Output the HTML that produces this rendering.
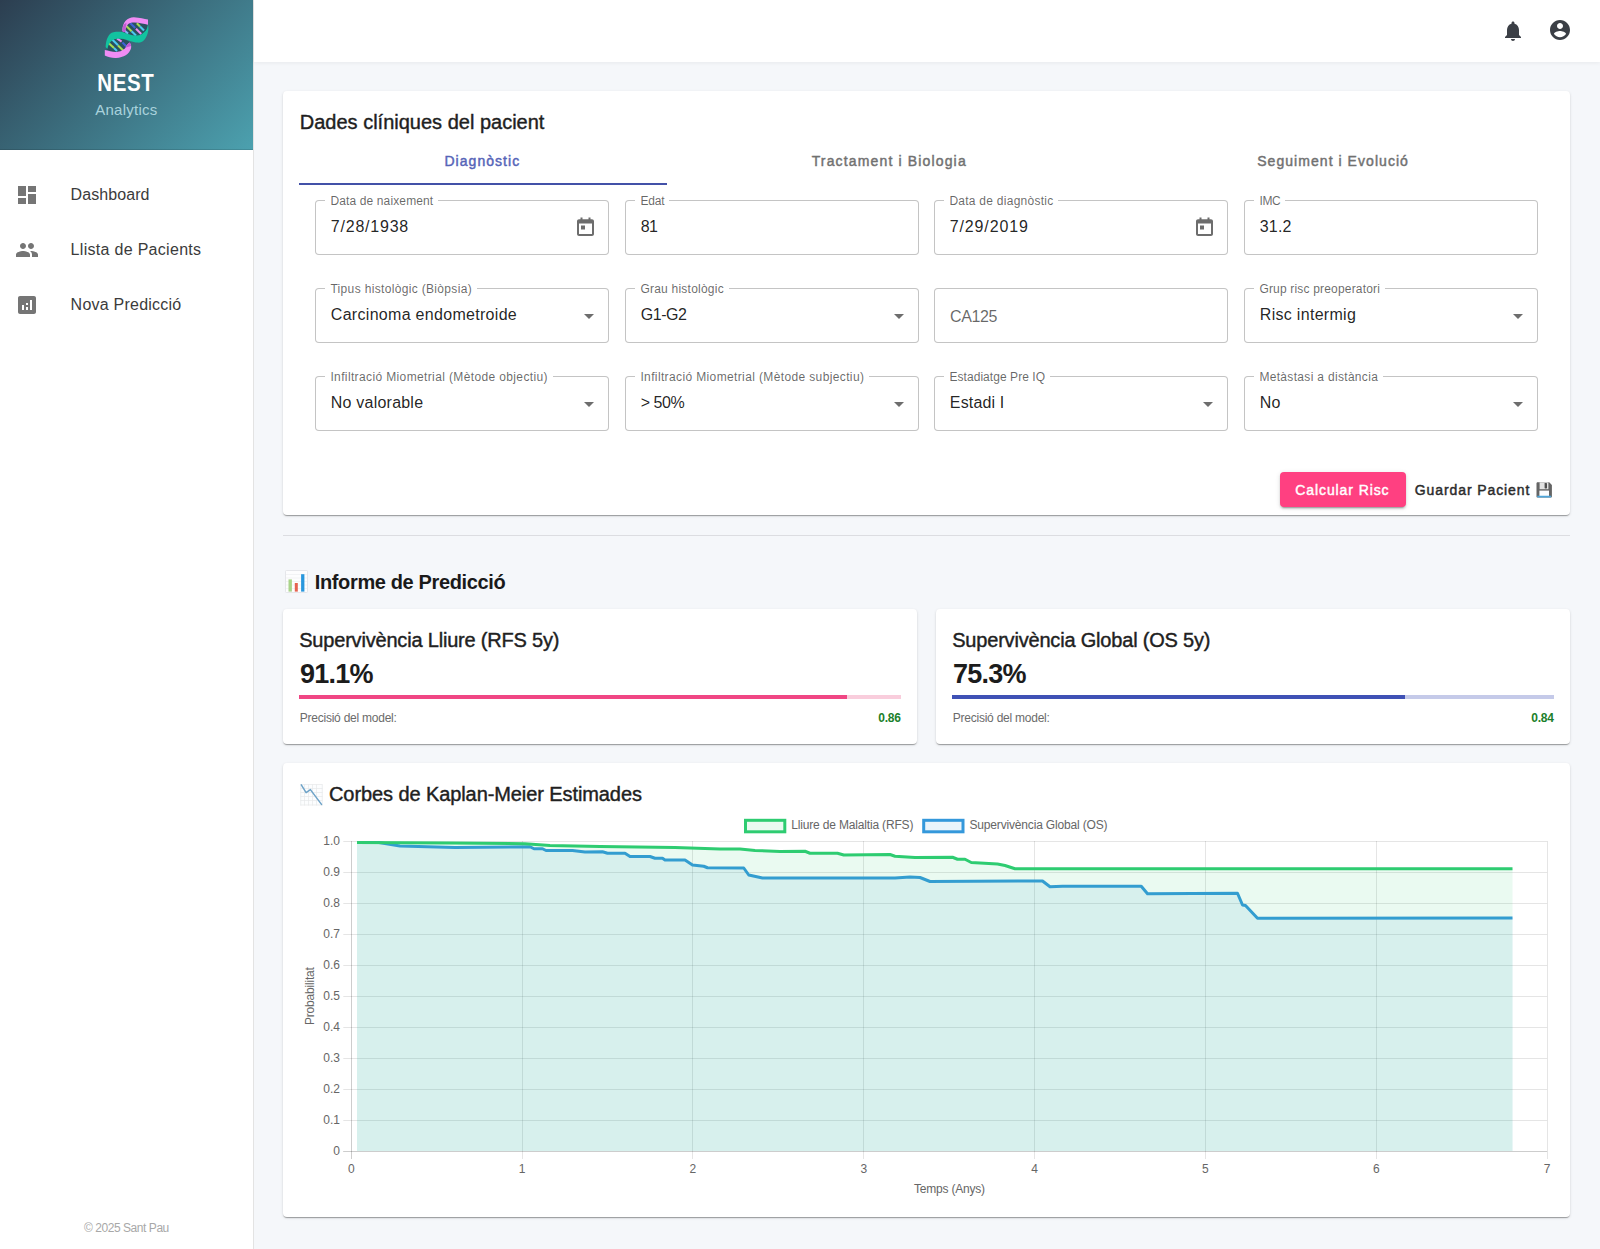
<!DOCTYPE html>
<html><head><meta charset="utf-8"><title>NEST Analytics</title><style>
*{margin:0;padding:0;box-sizing:border-box}
html,body{width:1600px;height:1249px;overflow:hidden;background:#f5f7fa;font-family:"Liberation Sans",sans-serif}
.t{position:absolute;line-height:1;white-space:nowrap}
.abs{position:absolute}
#side{position:absolute;left:0;top:0;width:254px;height:1249px;background:#fff;border-right:1px solid #e3e3e3}
#sidehead{position:absolute;left:0;top:0;width:253px;height:150px;background:linear-gradient(135deg,#2c3e50 0%,#4ca1af 100%);box-shadow:inset 0 -1px 0 rgba(0,0,0,.12)}
#topbar{position:absolute;left:254px;top:0;width:1346px;height:62px;background:#fff;box-shadow:0 1px 4px rgba(0,0,0,.06)}
.card{position:absolute;background:#fff;border-radius:4px;box-shadow:0px 2px 1px -1px rgba(0,0,0,0.2),0px 1px 1px 0px rgba(0,0,0,0.14),0px 1px 3px 0px rgba(0,0,0,0.12)}
.fld{position:absolute;border:1px solid rgba(0,0,0,0.23);border-radius:4px;background:#fff}
.gap{position:absolute;height:3px;background:#fff}
svg{position:absolute;overflow:visible}
</style></head><body>
<div id="side"></div><div id="sidehead"></div>
<svg style="left:100px;top:12px" width="52" height="50" viewBox="0 0 52 50">
<path d="M24 13 C28 9.5 40 9.5 47 12.5 L47.5 18 C44 23 38 25 30 22.5 C27 21.5 25 21 24.2 20 Z" fill="#1e3f4c" opacity="0.55"/>
<path d="M7.5 31 C9 26 13 24.5 18 25.5 C24 27 29 28.5 30.5 31.5 C31 36 28 40 22 40.5 C15 40.5 9 39 6.5 37.5 Z" fill="#1e3f4c" opacity="0.55"/>
<g stroke-width="2.1" stroke-linecap="butt" fill="none">
<path d="M25.6 13.2 L31.6 19.2" stroke="#a6dc52"/><path d="M31.6 19.2 L36 23.6" stroke="#4cc8f0"/>
<path d="M24.8 18.8 L28 21.6" stroke="#7ab8f5"/>
<path d="M30.4 11.2 L35.2 16" stroke="#3f63d6"/><path d="M36 16.8 L41.2 22" stroke="#ee8cf2"/>
<path d="M36.8 11.2 L40 14.4" stroke="#a6dc52"/><path d="M40 14.4 L44 18.4" stroke="#4cc8f0"/>
<path d="M8 30.4 L14 36" stroke="#a6dc52"/><path d="M14 36 L17 39" stroke="#4cc8f0"/>
<path d="M12 27.2 L18 33.2" stroke="#4cc8f0"/><path d="M18 33.6 L24 39.2" stroke="#a6dc52"/>
<path d="M17 26.4 L21.6 29.6" stroke="#ee8cf2"/><path d="M22.4 30.4 L28 36" stroke="#3f63d6"/>
</g>
<path d="M22.4 19 C22 10 28 5 34 5.2 C40 5.5 44 7 48 7.6 L48 12.8 C44 12 40 10.6 34 10.5 C29 10.4 25.8 12.5 25.2 20 Z" fill="#f08cf5"/>
<path d="M22.6 16 C23 13 24.5 11.5 26.5 10.8 L25.2 20 L22.6 20 Z" fill="#c05ad0"/>
<path d="M4.8 38 C8 38.5 12 40 16 40 C20 40 24.5 38 26 34.8 C27 33 27.5 31.5 29.6 30.4 C31.5 32 31.5 35 30.8 37 C29 42 24 45.5 16 46 C12 46.2 8 45 4.8 43.6 Z" fill="#f08cf5"/>
<path d="M26 34.8 C27 33 27.5 31.5 29.6 30.4 C30.6 31.4 31 32.6 31 34 C29.5 34.5 28 35 26 35.5 Z" fill="#c05ad0"/>
<path d="M5.6 35 C5.8 30.5 6.6 27.5 7.8 25.2 C9.3 22.2 11 20.6 13.4 20.2 C15.6 19.7 17.6 19.6 20 19.7 C23 20 25.5 21.2 28 22 C31 23 33.5 23.6 36 23.6 C38.5 23.5 40.5 23 42 22 C44.3 20.5 45.8 18.6 46.6 17.2 C47.4 15.6 47.8 14.2 48.2 12.6 L48.4 17 C48.3 18.8 48 20.3 47.6 21.4 C46.7 24.2 45.5 26.6 44.2 28 C42.2 30.2 40 30.8 37.8 30.6 C34.8 30.5 32.3 29.8 29.8 29 C26.8 28 24.4 27 21.9 26.8 C19 26.6 16.3 26.7 14.4 27.2 C12.3 28 10.8 29.2 9.8 30.8 C8.6 32.8 7.8 34.8 7.3 37 Z" fill="#12c3a0"/>
</svg>
<div class="t " style="left:97.30px;top:74.25px;font-size:20.5px;color:#ffffff;font-weight:700;letter-spacing:0.600px;transform:scaleY(1.13);transform-origin:0 17.35px;">NEST</div>
<div class="t " style="left:95.20px;top:101.80px;font-size:15px;color:#a9d2dc;font-weight:400;letter-spacing:0.250px;">Analytics</div>
<svg style="left:15px;top:183px" width="24" height="24" viewBox="0 0 24 24"><path fill="#757575" d="M3 13h8V3H3v10zm0 8h8v-6H3v6zm10 0h8V11h-8v10zm0-18v6h8V3h-8z"/></svg>
<svg style="left:15px;top:238px" width="24" height="24" viewBox="0 0 24 24"><path fill="#757575" d="M16 11c1.66 0 2.99-1.34 2.99-3S17.66 5 16 5c-1.66 0-3 1.34-3 3s1.34 3 3 3zm-8 0c1.66 0 2.99-1.34 2.99-3S9.66 5 8 5C6.34 5 5 6.34 5 8s1.34 3 3 3zm0 2c-2.33 0-7 1.17-7 3.5V19h14v-2.5c0-2.33-4.67-3.5-7-3.5zm8 0c-.29 0-.62.02-.97.05 1.16.84 1.97 1.97 1.97 3.45V19h6v-2.5c0-2.33-4.67-3.5-7-3.5z"/></svg>
<svg style="left:15px;top:293px" width="24" height="24" viewBox="0 0 24 24"><path fill="#757575" d="M19 3H5c-1.1 0-2 .9-2 2v14c0 1.1.9 2 2 2h14c1.1 0 2-.9 2-2V5c0-1.1-.9-2-2-2zM9 17H7v-5h2v5zm4 0h-2v-3h2v3zm0-5h-2v-2h2v2zm4 5h-2V7h2v10z"/></svg>
<div class="t " style="left:70.60px;top:187.46px;font-size:16px;color:#3b3b3b;font-weight:400;letter-spacing:0.070px;">Dashboard</div>
<div class="t " style="left:70.60px;top:242.06px;font-size:16px;color:#3b3b3b;font-weight:400;letter-spacing:0.300px;">Llista de Pacients</div>
<div class="t " style="left:70.60px;top:297.26px;font-size:16px;color:#3b3b3b;font-weight:400;letter-spacing:0.230px;">Nova Predicció</div>
<div class="t " style="left:84.00px;top:1222.24px;font-size:12px;color:#a8a8a8;font-weight:400;letter-spacing:-0.450px;">© 2025 Sant Pau</div>
<div id="topbar"></div>
<svg style="left:1501px;top:18.5px" width="24" height="24" viewBox="0 0 24 24"><path fill="#3b3f46" d="M12 22c1.1 0 2-.9 2-2h-4c0 1.1.89 2 2 2zm6-6v-5c0-3.07-1.64-5.64-4.5-6.32V4c0-.83-.67-1.5-1.5-1.5s-1.5.67-1.5 1.5v.68C7.63 5.36 6 7.92 6 11v5l-2 2v1h16v-1l-2-2z"/></svg>
<svg style="left:1548px;top:18px" width="24" height="24" viewBox="0 0 24 24"><path fill="#3b3f46" d="M12 2C6.48 2 2 6.48 2 12s4.48 10 10 10 10-4.48 10-10S17.52 2 12 2zm0 3c1.66 0 3 1.34 3 3s-1.34 3-3 3-3-1.34-3-3 1.34-3 3-3zm0 14.2c-2.5 0-4.71-1.28-6-3.22.03-1.99 4-3.08 6-3.08 1.99 0 5.97 1.09 6 3.08-1.29 1.94-3.5 3.22-6 3.22z"/></svg>
<div class="card" style="left:283px;top:91px;width:1287px;height:424px"></div>
<div class="t " style="left:299.80px;top:111.67px;font-size:20px;color:#1f1f1f;font-weight:400;-webkit-text-stroke:0.4px #1f1f1f;">Dades clíniques del pacient</div>
<div class="t " style="left:444.40px;top:153.95px;font-size:14px;color:#5664b8;font-weight:400;letter-spacing:1.050px;-webkit-text-stroke:0.45px #5664b8;">Diagnòstic</div>
<div class="t " style="left:811.70px;top:154.15px;font-size:14px;color:#6f6f6f;font-weight:400;letter-spacing:1.150px;-webkit-text-stroke:0.45px #737373;">Tractament i Biologia</div>
<div class="t " style="left:1257.20px;top:154.15px;font-size:14px;color:#6f6f6f;font-weight:400;letter-spacing:1.050px;-webkit-text-stroke:0.45px #737373;">Seguiment i Evolució</div>
<div class="abs" style="left:299px;top:183px;width:368px;height:2px;background:#4351a8"></div>
<div class="fld" style="left:315px;top:200px;width:294px;height:55px"></div>
<div class="gap" style="left:325px;top:199px;width:112.9px"></div>
<div class="t " style="left:330.40px;top:194.64px;font-size:12px;color:rgba(0,0,0,0.6);font-weight:400;letter-spacing:0.130px;">Data de naixement</div>
<div class="t " style="left:330.80px;top:219.46px;font-size:16px;color:rgba(0,0,0,0.87);font-weight:400;letter-spacing:0.780px;">7/28/1938</div>
<svg style="left:577px;top:217px" width="17" height="19" viewBox="0 0 17 19"><path fill="#6d6d6d" d="M3.5 0.5h2v1.8h6V0.5h2v1.8H15c1.1 0 2 .9 2 2V17c0 1.1-.9 2-2 2H2c-1.1 0-2-.9-2-2V4.3c0-1.1.9-2 2-2h1.5zM2 6.5V17h13V6.5zM4 8.5h4v4H4z"/></svg>
<div class="fld" style="left:625px;top:200px;width:294px;height:55px"></div>
<div class="gap" style="left:635px;top:199px;width:34.0px"></div>
<div class="t " style="left:640.40px;top:194.64px;font-size:12px;color:rgba(0,0,0,0.6);font-weight:400;letter-spacing:-0.160px;">Edat</div>
<div class="t " style="left:640.80px;top:219.46px;font-size:16px;color:rgba(0,0,0,0.87);font-weight:400;letter-spacing:-0.600px;">81</div>
<div class="fld" style="left:934px;top:200px;width:294px;height:55px"></div>
<div class="gap" style="left:944px;top:199px;width:114.1px"></div>
<div class="t " style="left:949.40px;top:194.64px;font-size:12px;color:rgba(0,0,0,0.6);font-weight:400;letter-spacing:0.260px;">Data de diagnòstic</div>
<div class="t " style="left:949.80px;top:219.46px;font-size:16px;color:rgba(0,0,0,0.87);font-weight:400;letter-spacing:0.850px;">7/29/2019</div>
<svg style="left:1196px;top:217px" width="17" height="19" viewBox="0 0 17 19"><path fill="#6d6d6d" d="M3.5 0.5h2v1.8h6V0.5h2v1.8H15c1.1 0 2 .9 2 2V17c0 1.1-.9 2-2 2H2c-1.1 0-2-.9-2-2V4.3c0-1.1.9-2 2-2h1.5zM2 6.5V17h13V6.5zM4 8.5h4v4H4z"/></svg>
<div class="fld" style="left:1244px;top:200px;width:294px;height:55px"></div>
<div class="gap" style="left:1254px;top:199px;width:31.1px"></div>
<div class="t " style="left:1259.40px;top:194.64px;font-size:12px;color:rgba(0,0,0,0.6);font-weight:400;letter-spacing:-0.300px;">IMC</div>
<div class="t " style="left:1259.80px;top:219.46px;font-size:16px;color:rgba(0,0,0,0.87);font-weight:400;letter-spacing:0.160px;">31.2</div>
<div class="fld" style="left:315px;top:288px;width:294px;height:55px"></div>
<div class="gap" style="left:325px;top:287px;width:151.7px"></div>
<div class="t " style="left:330.40px;top:282.64px;font-size:12px;color:rgba(0,0,0,0.6);font-weight:400;letter-spacing:0.335px;">Tipus histològic (Biòpsia)</div>
<div class="t " style="left:330.80px;top:307.46px;font-size:16px;color:rgba(0,0,0,0.87);font-weight:400;letter-spacing:0.300px;">Carcinoma endometroide</div>
<svg style="left:577px;top:303.5px" width="24" height="24" viewBox="0 0 24 24"><path fill="#6d6d6d" d="M7 10l5 5 5-5z"/></svg>
<div class="fld" style="left:625px;top:288px;width:294px;height:55px"></div>
<div class="gap" style="left:635px;top:287px;width:93.5px"></div>
<div class="t " style="left:640.40px;top:282.64px;font-size:12px;color:rgba(0,0,0,0.6);font-weight:400;letter-spacing:0.230px;">Grau histològic</div>
<div class="t " style="left:640.80px;top:307.46px;font-size:16px;color:rgba(0,0,0,0.87);font-weight:400;letter-spacing:-0.500px;">G1-G2</div>
<svg style="left:887px;top:303.5px" width="24" height="24" viewBox="0 0 24 24"><path fill="#6d6d6d" d="M7 10l5 5 5-5z"/></svg>
<div class="fld" style="left:934px;top:288px;width:294px;height:55px"></div>
<div class="t " style="left:950.00px;top:308.96px;font-size:16px;color:rgba(0,0,0,0.6);font-weight:400;letter-spacing:-0.360px;">CA125</div>
<div class="fld" style="left:1244px;top:288px;width:294px;height:55px"></div>
<div class="gap" style="left:1254px;top:287px;width:130.7px"></div>
<div class="t " style="left:1259.40px;top:282.64px;font-size:12px;color:rgba(0,0,0,0.6);font-weight:400;letter-spacing:0.180px;">Grup risc preoperatori</div>
<div class="t " style="left:1259.80px;top:307.46px;font-size:16px;color:rgba(0,0,0,0.87);font-weight:400;letter-spacing:0.300px;">Risc intermig</div>
<svg style="left:1506px;top:303.5px" width="24" height="24" viewBox="0 0 24 24"><path fill="#6d6d6d" d="M7 10l5 5 5-5z"/></svg>
<div class="fld" style="left:315px;top:376px;width:294px;height:55px"></div>
<div class="gap" style="left:325px;top:375px;width:227.5px"></div>
<div class="t " style="left:330.40px;top:370.64px;font-size:12px;color:rgba(0,0,0,0.6);font-weight:400;letter-spacing:0.370px;">Infiltració Miometrial (Mètode objectiu)</div>
<div class="t " style="left:330.80px;top:395.46px;font-size:16px;color:rgba(0,0,0,0.87);font-weight:400;letter-spacing:0.220px;">No valorable</div>
<svg style="left:577px;top:391.5px" width="24" height="24" viewBox="0 0 24 24"><path fill="#6d6d6d" d="M7 10l5 5 5-5z"/></svg>
<div class="fld" style="left:625px;top:376px;width:294px;height:55px"></div>
<div class="gap" style="left:635px;top:375px;width:233.9px"></div>
<div class="t " style="left:640.40px;top:370.64px;font-size:12px;color:rgba(0,0,0,0.6);font-weight:400;letter-spacing:0.370px;">Infiltració Miometrial (Mètode subjectiu)</div>
<div class="t " style="left:640.80px;top:395.46px;font-size:16px;color:rgba(0,0,0,0.87);font-weight:400;letter-spacing:-0.500px;">> 50%</div>
<svg style="left:887px;top:391.5px" width="24" height="24" viewBox="0 0 24 24"><path fill="#6d6d6d" d="M7 10l5 5 5-5z"/></svg>
<div class="fld" style="left:934px;top:376px;width:294px;height:55px"></div>
<div class="gap" style="left:944px;top:375px;width:105.7px"></div>
<div class="t " style="left:949.40px;top:370.64px;font-size:12px;color:rgba(0,0,0,0.6);font-weight:400;letter-spacing:0.060px;">Estadiatge Pre IQ</div>
<div class="t " style="left:949.80px;top:395.46px;font-size:16px;color:rgba(0,0,0,0.87);font-weight:400;letter-spacing:0.160px;">Estadi I</div>
<svg style="left:1196px;top:391.5px" width="24" height="24" viewBox="0 0 24 24"><path fill="#6d6d6d" d="M7 10l5 5 5-5z"/></svg>
<div class="fld" style="left:1244px;top:376px;width:294px;height:55px"></div>
<div class="gap" style="left:1254px;top:375px;width:128.8px"></div>
<div class="t " style="left:1259.40px;top:370.64px;font-size:12px;color:rgba(0,0,0,0.6);font-weight:400;letter-spacing:0.320px;">Metàstasi a distància</div>
<div class="t " style="left:1259.80px;top:395.46px;font-size:16px;color:rgba(0,0,0,0.87);font-weight:400;letter-spacing:0.260px;">No</div>
<svg style="left:1506px;top:391.5px" width="24" height="24" viewBox="0 0 24 24"><path fill="#6d6d6d" d="M7 10l5 5 5-5z"/></svg>
<div class="abs" style="left:1280px;top:472px;width:126px;height:35px;border-radius:4px;background:#ff4081;box-shadow:0px 3px 1px -2px rgba(0,0,0,0.2),0px 2px 2px 0px rgba(0,0,0,0.14),0px 1px 5px 0px rgba(0,0,0,0.12)"></div>
<div class="t " style="left:1295.30px;top:482.85px;font-size:14px;color:#ffffff;font-weight:400;letter-spacing:0.900px;-webkit-text-stroke:0.45px #ffffff;">Calcular Risc</div>
<div class="t " style="left:1414.80px;top:482.85px;font-size:14px;color:#2b2b2b;font-weight:400;letter-spacing:0.900px;-webkit-text-stroke:0.45px #2b2b2b;">Guardar Pacient</div>
<svg style="left:1536px;top:482px" width="16" height="16" viewBox="0 0 16 16">
<path d="M0.5 1.5C0.5 0.9 0.9 0.3 1.5 0.3H13.2L15.9 3V14.5C15.9 15.1 15.4 15.5 14.9 15.5H1.5C0.9 15.5 0.5 15.1 0.5 14.5z" fill="#646464"/>
<rect x="3.6" y="0.3" width="8.8" height="6.9" fill="#e2e2e2"/><rect x="8.6" y="1" width="2.4" height="5.4" rx="0.6" fill="#505050"/>
<rect x="3.4" y="8.6" width="9.6" height="5.6" fill="#fbfdff"/><path d="M1.2 13.8H15.2V14.6C15.2 15.1 14.9 15.5 14.4 15.5H2C1.5 15.5 1.2 15.1 1.2 14.6z" fill="#4ea6db"/>
</svg>
<div class="abs" style="left:283px;top:535px;width:1287px;height:1px;background:#dcdde1"></div>
<svg style="left:285px;top:570px" width="23" height="23" viewBox="0 0 23 23">
<rect x="0.5" y="0.5" width="22" height="22" rx="1" fill="#fdfdfe" stroke="#dfe1e4" stroke-width="0.8"/>
<g stroke="#eceef0" stroke-width="0.7"><path d="M1 4.5h21M1 8h21M1 11.5h21M1 15h21M1 18.5h21"/></g>
<rect x="3.5" y="9.4" width="3.4" height="12.2" fill="#a9d48a"/>
<rect x="9.8" y="13" width="3" height="8.6" fill="#e5624f"/>
<rect x="16.1" y="4.2" width="3.3" height="17.4" fill="#2897dd"/>
</svg>
<div class="t " style="left:314.80px;top:571.87px;font-size:20px;color:#1a1a1a;font-weight:700;letter-spacing:-0.370px;">Informe de Predicció</div>
<div class="card" style="left:283px;top:609px;width:634px;height:135px"></div>
<div class="t " style="left:299.20px;top:629.97px;font-size:20px;color:#212121;font-weight:400;letter-spacing:-0.190px;-webkit-text-stroke:0.4px #212121;">Supervivència Lliure (RFS 5y)</div>
<div class="t " style="left:300.00px;top:660.94px;font-size:27px;color:#1c1c1c;font-weight:700;letter-spacing:-0.750px;">91.1%</div>
<div class="abs" style="left:299px;top:695px;width:602px;height:4px;background:#f9cddc"></div>
<div class="abs" style="left:299px;top:695px;width:548.4px;height:4px;background:#f04684"></div>
<div class="t " style="left:299.80px;top:712.44px;font-size:12px;color:#6b6b6b;font-weight:400;letter-spacing:-0.240px;">Precisió del model:</div>
<div class="t " style="left:878.30px;top:712.34px;font-size:12px;color:#1b7f2b;font-weight:700;letter-spacing:-0.220px;">0.86</div>
<div class="card" style="left:936px;top:609px;width:634px;height:135px"></div>
<div class="t " style="left:952.20px;top:629.97px;font-size:20px;color:#212121;font-weight:400;letter-spacing:-0.190px;-webkit-text-stroke:0.4px #212121;">Supervivència Global (OS 5y)</div>
<div class="t " style="left:953.00px;top:660.94px;font-size:27px;color:#1c1c1c;font-weight:700;letter-spacing:-0.750px;">75.3%</div>
<div class="abs" style="left:952px;top:695px;width:602px;height:4px;background:#c5cae9"></div>
<div class="abs" style="left:952px;top:695px;width:453.3px;height:4px;background:#3f51b5"></div>
<div class="t " style="left:952.80px;top:712.44px;font-size:12px;color:#6b6b6b;font-weight:400;letter-spacing:-0.240px;">Precisió del model:</div>
<div class="t " style="left:1531.30px;top:712.34px;font-size:12px;color:#1b7f2b;font-weight:700;letter-spacing:-0.220px;">0.84</div>
<div class="card" style="left:283px;top:763px;width:1287px;height:454px"></div>
<svg style="left:300px;top:784px" width="23" height="22" viewBox="0 0 23 22">
<rect x="0.5" y="0.3" width="22" height="21.4" fill="#fcfdfe"/>
<g stroke="#e6e8ea" stroke-width="0.7"><path d="M0.5 0.5h22M0.5 4.5h22M0.5 8.5h22M0.5 12.5h22M0.5 16.5h22M0.5 21h22M0.7 0.5v21M4.5 0.5v21M8.5 0.5v21M12.5 0.5v21M16.5 0.5v21M22.3 0.5v21"/></g>
<path d="M1.3 0.8 L6.1 8.6 L10.4 5.6 L21.5 20.4" fill="none" stroke="#6ea3c8" stroke-width="1.5" stroke-linejoin="round" stroke-linecap="round"/>
</svg>
<div class="t " style="left:329.00px;top:783.67px;font-size:20px;color:#212121;font-weight:400;letter-spacing:-0.090px;-webkit-text-stroke:0.4px #212121;">Corbes de Kaplan-Meier Estimades</div>
<svg style="left:0;top:0" width="1600" height="1249" viewBox="0 0 1600 1249">
<path d="M343.3 1151.5H1547.1 M343.3 1120.5H1547.1 M343.3 1089.5H1547.1 M343.3 1058.5H1547.1 M343.3 1027.5H1547.1 M343.3 996.5H1547.1 M343.3 965.5H1547.1 M343.3 934.5H1547.1 M343.3 903.5H1547.1 M343.3 872.5H1547.1 M343.3 841.5H1547.1 M351.5 841V1159 M522.5 841V1159 M692.5 841V1159 M863.5 841V1159 M1034.5 841V1159 M1205.5 841V1159 M1376.5 841V1159 M1547.5 841V1159" stroke="rgba(0,0,0,0.1)" stroke-width="1" fill="none"/>
<path d="M351.5 841V1159M343 1151.5H1547.1" stroke="rgba(0,0,0,0.1)" stroke-width="1" fill="none"/>
<path d="M357 842.5 L379 842.5 L400 846 L455 847.5 L530 846.75 L534 848.75 L542.5 848.75 L546 850.5 L572.5 850.5 L585 852 L602.5 851.75 L607.5 853.25 L625 853.25 L630 856.5 L650 856.5 L655 858.25 L662.5 858.25 L665 860 L685 860 L692.5 865 L703.75 866.25 L707.5 867.75 L743.75 868 L748.75 875 L762.5 878 L895 878 L910 877 L920 877.5 L930 881.5 L1027.5 881 L1042.5 881 L1050 886.75 L1062.5 886.25 L1141.25 886.25 L1147.5 893.75 L1237.5 893.25 L1242.5 905 L1245.5 905.5 L1257.5 918.25 L1512.5 918 L1512.5 1151 L357 1151 Z" fill="rgba(52,152,219,0.1)"/>
<path d="M357 842.5 L379 842.5 L400 846 L455 847.5 L530 846.75 L534 848.75 L542.5 848.75 L546 850.5 L572.5 850.5 L585 852 L602.5 851.75 L607.5 853.25 L625 853.25 L630 856.5 L650 856.5 L655 858.25 L662.5 858.25 L665 860 L685 860 L692.5 865 L703.75 866.25 L707.5 867.75 L743.75 868 L748.75 875 L762.5 878 L895 878 L910 877 L920 877.5 L930 881.5 L1027.5 881 L1042.5 881 L1050 886.75 L1062.5 886.25 L1141.25 886.25 L1147.5 893.75 L1237.5 893.25 L1242.5 905 L1245.5 905.5 L1257.5 918.25 L1512.5 918" fill="none" stroke="#3498db" stroke-width="3" stroke-linejoin="round"/>
<path d="M357 842.5 L450 843 L525 843.75 L550 845.5 L600 846.5 L675 847.5 L720 849 L740 849 L755 850.5 L780 851.5 L805 851.25 L810 853.25 L837.5 853.25 L843.75 855 L890 854.5 L895 856.25 L915 857.5 L952.5 857.25 L957.5 859.25 L965 859.25 L971.25 862.5 L997.5 864 L1005 865.5 L1015 868.75 L1512.5 868.75 L1512.5 1151 L357 1151 Z" fill="rgba(46,204,113,0.1)"/>
<path d="M357 842.5 L450 843 L525 843.75 L550 845.5 L600 846.5 L675 847.5 L720 849 L740 849 L755 850.5 L780 851.5 L805 851.25 L810 853.25 L837.5 853.25 L843.75 855 L890 854.5 L895 856.25 L915 857.5 L952.5 857.25 L957.5 859.25 L965 859.25 L971.25 862.5 L997.5 864 L1005 865.5 L1015 868.75 L1512.5 868.75" fill="none" stroke="#2ecc71" stroke-width="3" stroke-linejoin="round"/>
<rect x="745.5" y="820.3" width="39.3" height="11.5" fill="rgba(46,204,113,0.1)" stroke="#2ecc71" stroke-width="3"/>
<rect x="923.7" y="820.3" width="39.3" height="11.5" fill="rgba(52,152,219,0.1)" stroke="#3498db" stroke-width="3"/>
</svg>
<div class="t " style="left:791.30px;top:819.44px;font-size:12px;color:#666666;font-weight:400;letter-spacing:-0.170px;">Lliure de Malaltia (RFS)</div>
<div class="t " style="left:969.50px;top:819.44px;font-size:12px;color:#666666;font-weight:400;letter-spacing:-0.170px;">Supervivència Global (OS)</div>
<div class="t " style="left:333.33px;top:1145.44px;font-size:12px;color:#666666;font-weight:400;">0</div>
<div class="t " style="left:323.32px;top:1114.44px;font-size:12px;color:#666666;font-weight:400;">0.1</div>
<div class="t " style="left:323.32px;top:1083.44px;font-size:12px;color:#666666;font-weight:400;">0.2</div>
<div class="t " style="left:323.32px;top:1052.44px;font-size:12px;color:#666666;font-weight:400;">0.3</div>
<div class="t " style="left:323.32px;top:1021.44px;font-size:12px;color:#666666;font-weight:400;">0.4</div>
<div class="t " style="left:323.32px;top:990.44px;font-size:12px;color:#666666;font-weight:400;">0.5</div>
<div class="t " style="left:323.32px;top:959.44px;font-size:12px;color:#666666;font-weight:400;">0.6</div>
<div class="t " style="left:323.32px;top:928.44px;font-size:12px;color:#666666;font-weight:400;">0.7</div>
<div class="t " style="left:323.32px;top:897.44px;font-size:12px;color:#666666;font-weight:400;">0.8</div>
<div class="t " style="left:323.32px;top:866.44px;font-size:12px;color:#666666;font-weight:400;">0.9</div>
<div class="t " style="left:323.32px;top:835.44px;font-size:12px;color:#666666;font-weight:400;">1.0</div>
<div class="t " style="left:347.96px;top:1162.54px;font-size:12px;color:#666666;font-weight:400;">0</div>
<div class="t " style="left:518.79px;top:1162.54px;font-size:12px;color:#666666;font-weight:400;">1</div>
<div class="t " style="left:689.62px;top:1162.54px;font-size:12px;color:#666666;font-weight:400;">2</div>
<div class="t " style="left:860.45px;top:1162.54px;font-size:12px;color:#666666;font-weight:400;">3</div>
<div class="t " style="left:1031.28px;top:1162.54px;font-size:12px;color:#666666;font-weight:400;">4</div>
<div class="t " style="left:1202.11px;top:1162.54px;font-size:12px;color:#666666;font-weight:400;">5</div>
<div class="t " style="left:1372.93px;top:1162.54px;font-size:12px;color:#666666;font-weight:400;">6</div>
<div class="t " style="left:1543.76px;top:1162.54px;font-size:12px;color:#666666;font-weight:400;">7</div>
<div class="t " style="left:914.10px;top:1183.04px;font-size:12px;color:#666666;font-weight:400;letter-spacing:-0.220px;">Temps (Anys)</div>
<div class="t" style="left:304.042px;top:1024.9px;font-size:12px;letter-spacing:-0.2px;color:#666666;transform-origin:0 0;transform:rotate(-90deg)">Probabilitat</div>
</body></html>
